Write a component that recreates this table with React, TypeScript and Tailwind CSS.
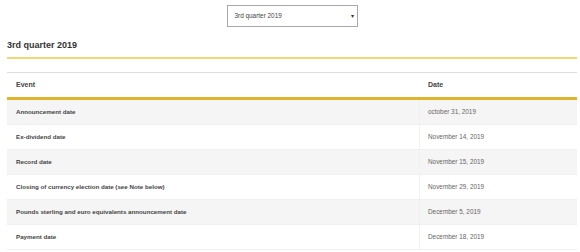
import React from "react";

const rows: [string, string][] = [
  ["Announcement date", "october 31, 2019"],
  ["Ex-dividend date", "November 14, 2019"],
  ["Record date", "November 15, 2019"],
  ["Closing of currency election date (see Note below)", "November 29, 2019"],
  ["Pounds sterling and euro equivalents announcement date", "December 5, 2019"],
  ["Payment date", "December 18, 2019"],
];

export default function App() {
  return (
    <div
      className="w-[580px] h-[252px] overflow-hidden bg-white pl-[7px] pr-[3px]"
      style={{ fontFamily: '"Liberation Sans", Arial, sans-serif' }}
    >
      <div className="flex justify-center pt-[5px]">
        <div className="relative w-[131px] h-[22px] border border-[#a8a8a8] bg-white flex items-center pl-[7px] text-[6.4px] text-[#444]">
          <span>3rd quarter 2019</span>
          <span className="absolute right-[3px] top-[6px] text-[6px] text-[#333]">▾</span>
        </div>
      </div>

      <h2 className="mt-[12px] h-[12px] leading-[12px] text-[9px] font-bold text-[#333]">
        3rd quarter 2019
      </h2>
      <div className="mt-[6px] h-[2px] bg-[#f1d774]" />

      <div className="mt-[13px] border-t border-[#dedede]">
        <div className="flex h-[27px] border-b-[3px] border-[#dcb52a] text-[7px] font-bold text-[#444]">
          <div className="w-[413px] pl-[9px] flex items-center">Event</div>
          <div className="flex-1 pl-[8px] flex items-center">Date</div>
        </div>
        {rows.map(([event, date], i) => (
          <div
            key={event}
            className={`flex h-[25px] border-b border-[#f0f0f0] ${i % 2 === 0 ? "bg-[#f5f5f5]" : "bg-white"}`}
          >
            <div className="w-[413px] pl-[9px] flex items-center text-[6.2px] font-bold text-[#444] border-r border-[#f1f1f1]">
              {event}
            </div>
            <div className="flex-1 pl-[8px] flex items-center text-[6.4px] text-[#666]">{date}</div>
          </div>
        ))}
      </div>
    </div>
  );
}
